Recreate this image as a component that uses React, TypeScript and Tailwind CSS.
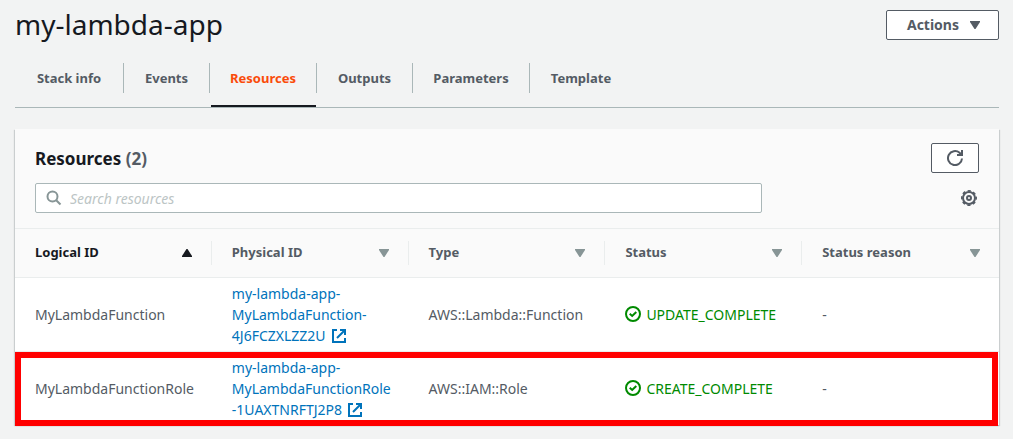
import React from 'react';

const tabs = [
  { label: 'Stack info', width: 'w-[109px]' },
  { label: 'Events', width: 'w-[86px]' },
  { label: 'Resources', width: 'w-[107px]', active: true },
  { label: 'Outputs', width: 'w-[96px]' },
  { label: 'Parameters', width: 'w-[117px]' },
  { label: 'Template', width: 'w-[102px]' },
];

const columns = ['Logical ID', 'Physical ID', 'Type', 'Status', 'Status reason'];

const rows = [
  {
    logicalId: 'MyLambdaFunction',
    physicalId: ['my-lambda-app-', 'MyLambdaFunction-', '4J6FCZXLZZ2U'],
    type: 'AWS::Lambda::Function',
    status: 'UPDATE_COMPLETE',
    reason: '-',
  },
  {
    logicalId: 'MyLambdaFunctionRole',
    physicalId: ['my-lambda-app-', 'MyLambdaFunctionRole', '-1UAXTNRFTJ2P8'],
    type: 'AWS::IAM::Role',
    status: 'CREATE_COMPLETE',
    reason: '-',
  },
];

function Triangle({ up = false, className = '' }: { up?: boolean; className?: string }) {
  return (
    <svg viewBox="0 0 10 8" aria-hidden="true" className={`h-2 w-2.5 shrink-0 fill-current ${className}`}>
      <path d={up ? 'M4.5 0h1L10 7v1H0V7Z' : 'M0 0H10V1L5.5 8h-1L0 1Z'} />
    </svg>
  );
}

function RefreshIcon() {
  return (
    <svg viewBox="0 0 16 16" aria-hidden="true" className="h-4 w-4" fill="none" stroke="currentColor" strokeWidth="2">
      <path d="M15 8.5A7 7 0 1 1 12.6 2.8L14.5 5" />
      <path d="M15 0v5h-5" />
    </svg>
  );
}

function GearIcon() {
  return (
    <svg viewBox="0 0 16 16" aria-hidden="true" className="h-4 w-4" fill="none" stroke="currentColor">
      <circle cx="8" cy="8" r="6" strokeWidth="2" />
      <circle cx="8" cy="8" r="7.2" strokeWidth="1.6" strokeDasharray="3.2 2.455" strokeDashoffset="1.6" />
      <circle cx="8" cy="8" r="2" strokeWidth="2" />
    </svg>
  );
}

function SearchIcon() {
  return (
    <svg viewBox="0 0 16 16" aria-hidden="true" className="h-4 w-4 shrink-0 text-[#879596]" fill="none" stroke="currentColor" strokeWidth="2">
      <circle cx="6.5" cy="6.5" r="5" />
      <path d="m10.2 10.2 4.3 4.3" />
    </svg>
  );
}

function ExternalIcon() {
  return (
    <svg viewBox="0 0 14 14" aria-hidden="true" className="ml-1.5 inline h-3.5 w-3.5 align-[-2px]" fill="none" stroke="currentColor" strokeWidth="2">
      <path d="M5 1H1v12h12V9" />
      <path d="M8 1h5v5M13 1 5 9" />
    </svg>
  );
}

function CheckIcon() {
  return (
    <svg viewBox="0 0 16 16" aria-hidden="true" className="h-4 w-4 shrink-0" fill="none" stroke="currentColor" strokeWidth="2">
      <circle cx="8" cy="8" r="7" />
      <path d="m4.7 7.8 2.5 2.2 4.1-4" />
    </svg>
  );
}

export default function App() {
  return (
    <div className="min-h-screen bg-[#f2f3f3] pt-[9px] pr-3.5 pl-[15px] font-['Noto_Sans',sans-serif] text-[14px] leading-[21px] text-[#545b64]">
      <header className="flex h-[31px] items-center justify-between">
        <h1 className="text-[28px] leading-[31px] text-[#16191f]">my-lambda-app</h1>
        <button type="button" className="flex h-[30px] items-center gap-[11px] rounded-xs border border-[#545b64] bg-white pr-[18px] pl-5 font-bold">
          Actions
          <Triangle />
        </button>
      </header>

      <nav className="mt-[23px] flex h-[45px] border-b border-[#aab7b8] text-[13px]">
        {tabs.map((tab, i) => (
          <a
            key={tab.label}
            href={`#${tab.label}`}
            className={`relative flex h-[30px] items-center justify-center font-bold whitespace-nowrap ${tab.width} ${
              i < tabs.length - 1 ? 'border-r border-[#aab7b8]' : ''
            } ${tab.active ? 'text-[#fa4b0a]' : ''}`}
          >
            {tab.label}
            {tab.active && <span className="absolute right-0 -bottom-[14px] left-px h-0.5 bg-[#16191f]" />}
          </a>
        ))}
      </nav>

      <main className="mt-[21px] bg-white shadow-[0_1px_1px_0_rgba(0,28,36,0.1),1px_1px_1px_0_rgba(0,28,36,0.15),-1px_1px_1px_0_rgba(0,28,36,0.15)]">
        <div className="border-b border-[#eaeded] bg-[#fafafa] px-5 pt-[14px] pb-[15px]">
          <div className="flex h-[30px] items-center justify-between">
            <h2 className="text-[17px] font-bold text-[#16191f]">
              Resources <span className="text-[#545b64]">(2)</span>
            </h2>
            <button type="button" aria-label="Refresh" className="flex h-[30px] w-12 items-center justify-center rounded-xs border border-[#545b64] bg-white">
              <RefreshIcon />
            </button>
          </div>
          <div className="mt-2.5 flex items-center justify-between">
            <label className="flex h-[30px] w-[77%] items-center gap-2 rounded-xs border border-[#aab7b8] bg-white px-2.5">
              <SearchIcon />
              <input
                type="search"
                aria-label="Search resources"
                placeholder="Search resources"
                className="min-w-0 grow bg-transparent outline-none placeholder:text-[#bcc5c5] placeholder:italic"
              />
            </label>
            <button type="button" aria-label="Settings" className="mr-0.5">
              <GearIcon />
            </button>
          </div>
        </div>

        <div className="relative">
          <table className="w-full table-fixed text-left">
            <thead className="bg-[#fafafa] text-[13px]">
              <tr className="h-12 border-b border-[#eaeded]">
                {columns.map((column, i) => (
                  <th key={column} className="p-0 font-bold">
                    <div
                      className={`flex h-6 items-center justify-between pr-[19px] pl-5 ${
                        i < columns.length - 1 ? 'border-r border-[#eaeded]' : ''
                      } ${i === 0 ? 'text-[#16191f]' : ''}`}
                    >
                      {column}
                      <Triangle up={i === 0} className={i === 0 ? '' : 'text-[#879596]'} />
                    </div>
                  </th>
                ))}
              </tr>
            </thead>
            <tbody>
              {rows.map((row) => (
                <tr key={row.logicalId} className="border-b border-[#eaeded] last:border-b-0">
                  <td className="py-[5px] pl-5">{row.logicalId}</td>
                  <td className="py-[5px] pl-5 whitespace-nowrap">
                    <a href={`#${row.logicalId}`} className="text-[#0073bb]">
                      {row.physicalId[0]}
                      <br />
                      {row.physicalId[1]}
                      <br />
                      {row.physicalId[2]}
                      <ExternalIcon />
                    </a>
                  </td>
                  <td className="py-[5px] pl-5">{row.type}</td>
                  <td className="py-[5px] pl-5">
                    <span className="flex items-center gap-[5px] text-[#008a00]">
                      <CheckIcon />
                      {row.status}
                    </span>
                  </td>
                  <td className="py-[5px] pl-5">{row.reason}</td>
                </tr>
              ))}
            </tbody>
          </table>
          <div className="pointer-events-none absolute right-px -bottom-px left-0 h-[74px] border-6 border-[#ff0000]" />
        </div>
      </main>
    </div>
  );
}
